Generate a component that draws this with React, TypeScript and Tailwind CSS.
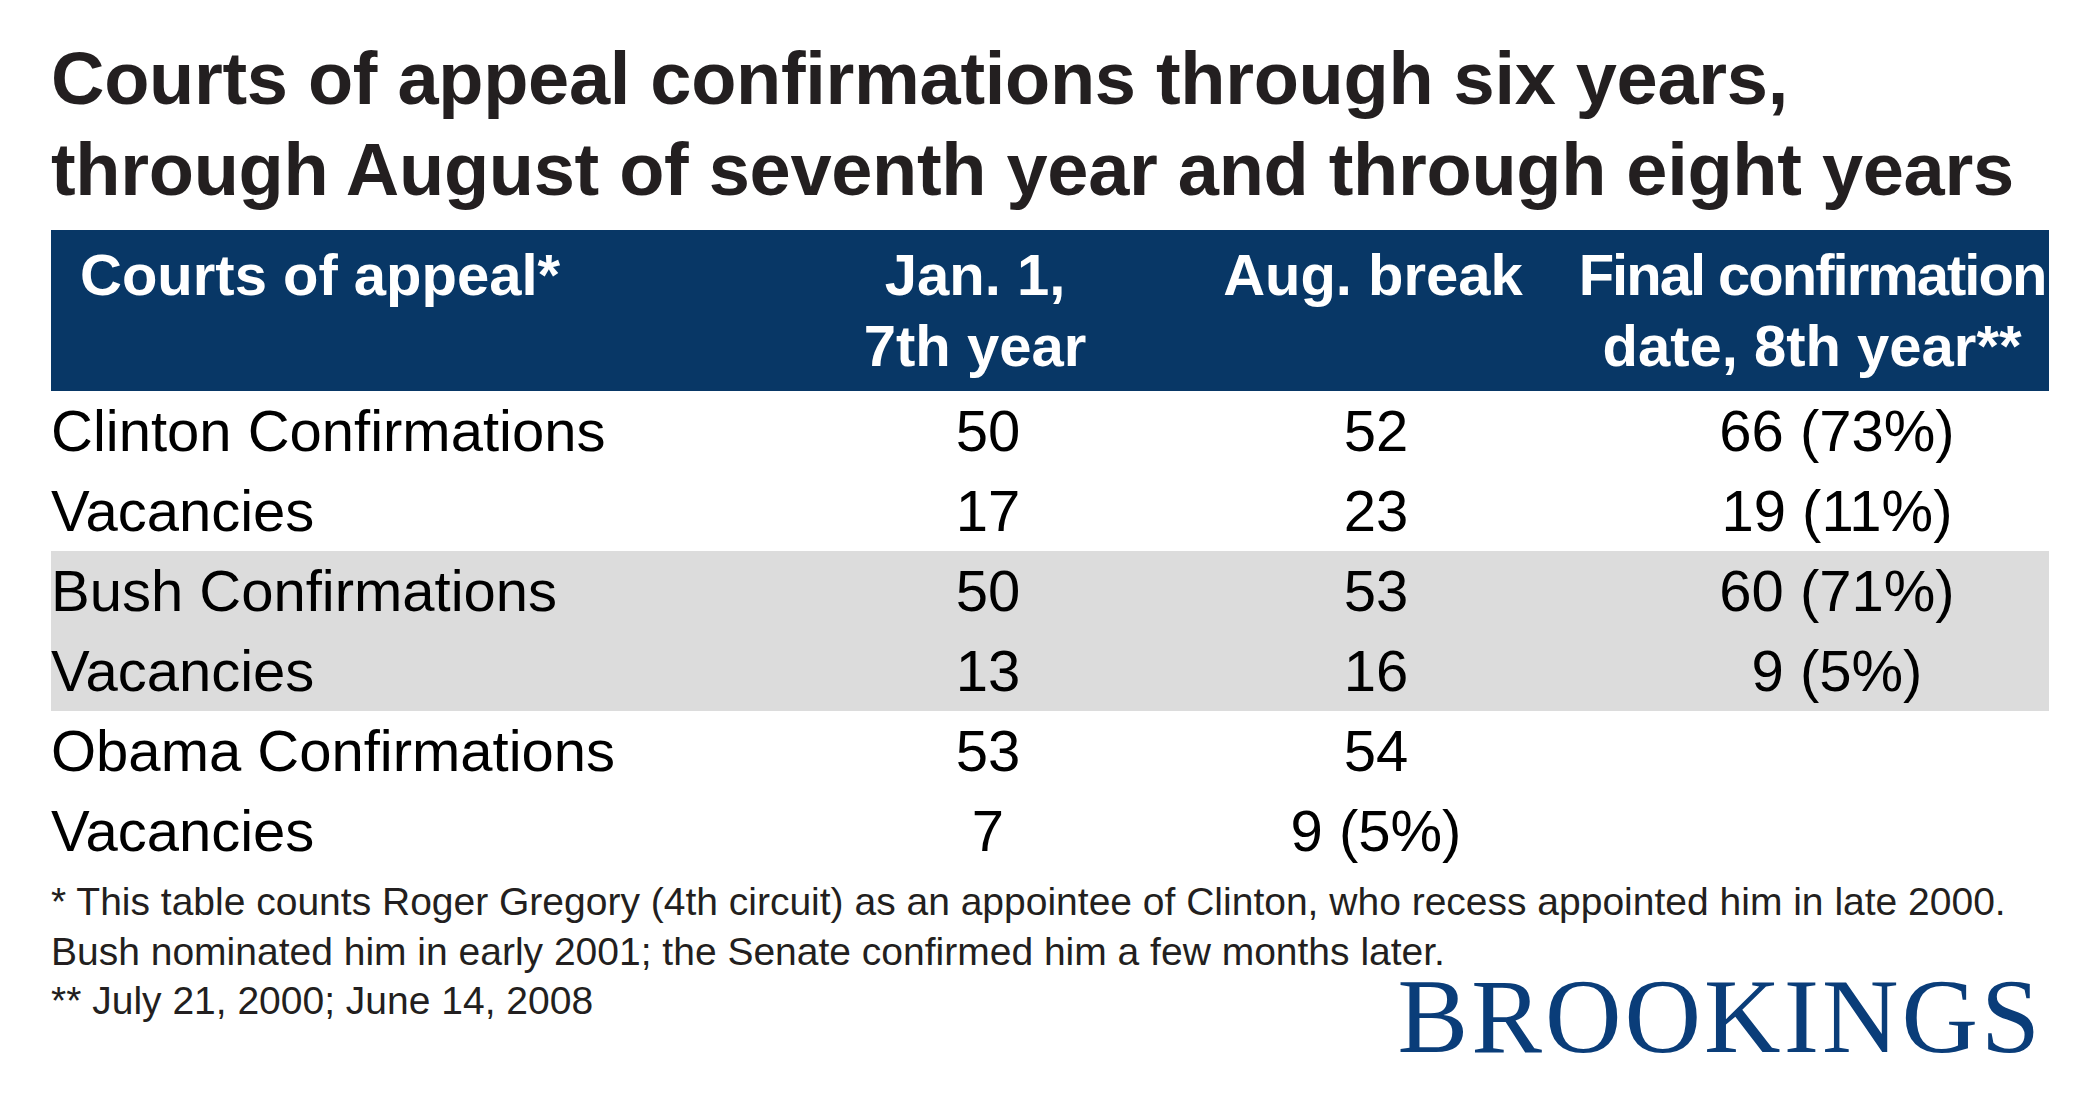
const rows = [
  { label: 'Clinton Confirmations', jan: '50', aug: '52', final: '66 (73%)', shade: false },
  { label: 'Vacancies', jan: '17', aug: '23', final: '19 (11%)', shade: false },
  { label: 'Bush Confirmations', jan: '50', aug: '53', final: '60 (71%)', shade: true },
  { label: 'Vacancies', jan: '13', aug: '16', final: '9 (5%)', shade: true },
  { label: 'Obama Confirmations', jan: '53', aug: '54', final: '', shade: false },
  { label: 'Vacancies', jan: '7', aug: '9 (5%)', final: '', shade: false },
];

const App = () => {
  return (
    <div className="w-[2100px] h-[1109px] bg-white font-['Liberation_Sans',Arial,sans-serif] overflow-hidden">
      <div className="pl-[51px] pr-[51px] pt-[33px]">
        <h1 className="text-[74px] leading-[91px] font-bold text-[#231f20] tracking-[-0.3px]">
          Courts of appeal confirmations through six years,
          <br />
          through August of seventh year and through eight years
        </h1>

        <div className="mt-[15px] h-[161px] bg-[#083766] text-white font-bold text-[58px] leading-[71px] pt-[9px] grid grid-cols-[728px_392px_404px_474px]">
          <div className="pl-[29px]">Courts of appeal*</div>
          <div className="text-center">
            Jan. 1,
            <br />
            7th year
          </div>
          <div className="text-center">Aug. break</div>
          <div className="text-center">
            <span className="tracking-[-2px]">Final confirmation</span>
            <br />
            date, 8th year**
          </div>
        </div>

        <div>
          {rows.map((r, i) => (
            <div
              key={i}
              className={`grid grid-cols-[798px_278px_498px_424px] h-[80px] text-[58px] leading-[80px] text-black ${
                r.shade ? 'bg-[#dcdcdc]' : ''
              }`}
            >
              <div>{r.label}</div>
              <div className="text-center">{r.jan}</div>
              <div className="text-center">{r.aug}</div>
              <div className="text-center">{r.final}</div>
            </div>
          ))}
        </div>

        <div className="mt-[6px] text-[39px] leading-[49.5px] text-[#231f20]">
          <p>
            * This table counts Roger Gregory (4th circuit) as an appointee of Clinton, who recess appointed him in
            late 2000.
          </p>
          <p>Bush nominated him in early 2001; the Senate confirmed him a few months later.</p>
          <div className="flex justify-between items-start">
            <p>** July 21, 2000; June 14, 2008</p>
            <div className="-mt-[12px] mr-[6px] font-['Liberation_Serif',serif] text-[106px] leading-[106px] tracking-[3px] text-[#0a3d79]">
              BROOKINGS
            </div>
          </div>
        </div>
      </div>
    </div>
  );
};

export default App;
